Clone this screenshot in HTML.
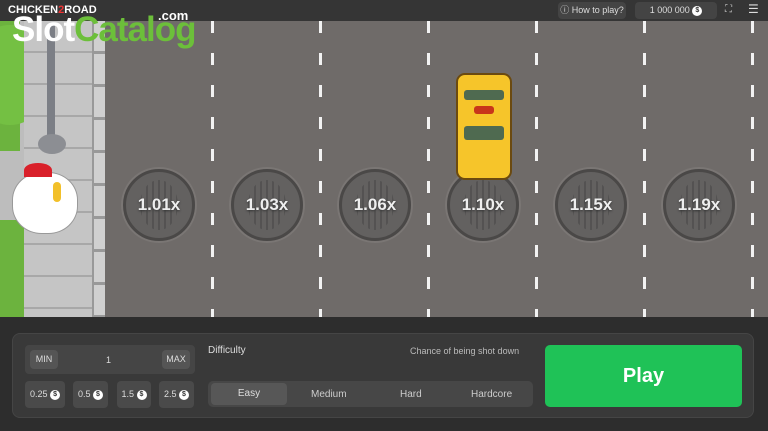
<!DOCTYPE html>
<html><head><style>
*{margin:0;padding:0;box-sizing:border-box}
body{width:768px;height:431px;overflow:hidden;background:#2d2d2d;font-family:"Liberation Sans",sans-serif;position:relative}
.a{position:absolute}
.road{left:105px;top:21px;width:663px;height:296px;background:#6f6b69}
.side{left:0;top:21px;width:105px;height:296px;background:#bdbdbd}
.dash{width:3px;top:21px;height:296px;background:repeating-linear-gradient(to bottom,#f2f2f2 0 12px,transparent 12px 32px)}
.mh{width:72px;height:72px;border-radius:50%;background:#636160;border:3px solid #4a4847;box-shadow:0 0 0 2px #7a7674;top:169px;color:#eee;font-weight:bold;font-size:17px;text-align:center;line-height:66px;text-shadow:0 1px 2px #333}
.mh::before{content:"";position:absolute;left:14px;right:14px;top:8px;bottom:8px;border-radius:50%;background:repeating-linear-gradient(90deg,#444 0 2px,transparent 2px 6px);opacity:.5}
.mh span{position:relative}
.btn{background:#4a4a4a;border-radius:4px;color:#ddd;font-size:9px;text-align:center}
.coin{display:inline-block;width:10px;height:10px;border-radius:50%;background:#fff;color:#333;font-size:7px;line-height:10px;font-weight:bold;vertical-align:middle}
</style></head><body>
<div class="a" style="left:0;top:0;width:768px;height:21px;background:#353535"></div>
<div class="a side"></div>
<div class="a" style="left:0;top:21px;width:20px;height:130px;background:#6cb33e"></div>
<div class="a" style="left:-25px;top:25px;width:70px;height:100px;border-radius:35px;background:#74c043"></div>
<div class="a" style="left:0;top:220px;width:26px;height:97px;background:#6cb33e"></div>
<div class="a" style="left:24px;top:21px;width:68px;height:296px;background:repeating-linear-gradient(to bottom,#c5c5c5 0 30px,#a8a8a8 30px 32px)"></div>
<div class="a" style="left:92px;top:21px;width:13px;height:296px;background:repeating-linear-gradient(to bottom,#d0d0d0 0 30px,#999 30px 33px);border-left:2px solid #999"></div>
<div class="a" style="left:47px;top:25px;width:8px;height:115px;background:#7c7f86"></div>
<div class="a" style="left:38px;top:134px;width:28px;height:20px;border-radius:50%;background:#8c8e93"></div>
<div class="a" style="left:12px;top:172px;width:66px;height:62px;border-radius:45%;background:#fff;border:1px solid #999"></div>
<div class="a" style="left:24px;top:163px;width:28px;height:14px;border-radius:50% 50% 0 0;background:#d9202a"></div>
<div class="a" style="left:53px;top:182px;width:8px;height:20px;border-radius:4px;background:#f2c02a"></div>
<div class="a road"></div>
<div class="a dash" style="left:211px"></div>
<div class="a dash" style="left:319px"></div>
<div class="a dash" style="left:427px"></div>
<div class="a dash" style="left:535px"></div>
<div class="a dash" style="left:643px"></div>
<div class="a dash" style="left:751px"></div>
<div class="a mh" style="left:123px"><span>1.01x</span></div>
<div class="a mh" style="left:231px"><span>1.03x</span></div>
<div class="a mh" style="left:339px"><span>1.06x</span></div>
<div class="a mh" style="left:447px"><span>1.10x</span></div>
<div class="a mh" style="left:555px"><span>1.15x</span></div>
<div class="a mh" style="left:663px"><span>1.19x</span></div>
<div class="a" style="left:456px;top:73px;width:56px;height:107px;border-radius:9px;background:#f6c52a;border:2px solid #6b4a10"></div>
<div class="a" style="left:464px;top:90px;width:40px;height:10px;background:#4f6a50;border-radius:3px"></div>
<div class="a" style="left:474px;top:106px;width:20px;height:8px;background:#c8361a;border-radius:3px"></div>
<div class="a" style="left:464px;top:126px;width:40px;height:14px;background:#4f6a50;border-radius:3px"></div>
<div class="a" style="left:8px;top:4px;font-size:11px;font-weight:bold;color:#fff">CHICKEN<span style="color:#e33">2</span>ROAD</div>
<div class="a" style="left:12px;top:10px;font-size:35px;font-weight:bold;color:#fff;letter-spacing:-1px">Slot<span style="color:#6cbf3a">Catalog</span></div>
<div class="a" style="left:158px;top:8px;font-size:13px;font-weight:bold;color:#fff">.com</div>
<div class="a btn" style="left:558px;top:2px;width:68px;height:17px;line-height:17px;background:#444">ⓘ How to play?</div>
<div class="a btn" style="left:635px;top:2px;width:82px;height:17px;line-height:17px;background:#444">1 000 000 <span class="coin">$</span></div>
<div class="a" style="left:725px;top:4px;color:#ccc;font-size:10px">⛶</div>
<div class="a" style="left:748px;top:2px;color:#ddd;font-size:12px">☰</div>
<div class="a" style="left:12px;top:333px;width:742px;height:85px;background:#393939;border-radius:8px;border:1px solid #454545"></div>
<div class="a" style="left:25px;top:345px;width:170px;height:29px;background:#454545;border-radius:4px"></div>
<div class="a btn" style="left:30px;top:350px;width:28px;height:19px;line-height:19px;background:#555">MIN</div>
<div class="a" style="left:106px;top:355px;color:#ddd;font-size:9px">1</div>
<div class="a btn" style="left:162px;top:350px;width:28px;height:19px;line-height:19px;background:#555">MAX</div>
<div class="a btn" style="left:25px;top:381px;width:40px;height:27px;line-height:27px">0.25 <span class="coin">$</span></div>
<div class="a btn" style="left:73px;top:381px;width:35px;height:27px;line-height:27px">0.5 <span class="coin">$</span></div>
<div class="a btn" style="left:117px;top:381px;width:34px;height:27px;line-height:27px">1.5 <span class="coin">$</span></div>
<div class="a btn" style="left:159px;top:381px;width:35px;height:27px;line-height:27px">2.5 <span class="coin">$</span></div>
<div class="a" style="left:208px;top:345px;color:#ddd;font-size:10px">Difficulty</div>
<div class="a" style="left:410px;top:346px;color:#bbb;font-size:9px">Chance of being shot down</div>
<div class="a" style="left:208px;top:381px;width:325px;height:26px;background:#474747;border-radius:5px"></div>
<div class="a btn" style="left:211px;top:383px;width:76px;height:22px;line-height:22px;background:#575757;font-size:10px">Easy</div>
<div class="a" style="left:311px;top:389px;color:#ccc;font-size:10px">Medium</div>
<div class="a" style="left:400px;top:389px;color:#ccc;font-size:10px">Hard</div>
<div class="a" style="left:471px;top:389px;color:#ccc;font-size:10px">Hardcore</div>
<div class="a" style="left:545px;top:345px;width:197px;height:62px;background:#1fc257;border-radius:5px;color:#fff;font-size:20px;font-weight:bold;text-align:center;line-height:62px">Play</div>
</body></html>
